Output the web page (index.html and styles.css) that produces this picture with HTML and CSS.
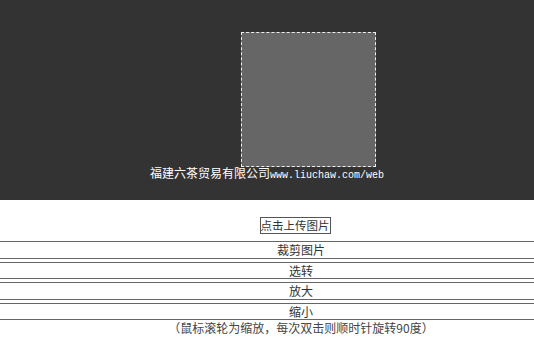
FILE: index.html
```html
<!DOCTYPE html>
<html lang="zh-CN">
<head>
    <meta charset="UTF-8">
    <meta name="viewport" content="width=device-width, initial-scale=1.0">
    <title>图片裁剪</title>
    <link rel="stylesheet" href="styles.css">
</head>
<body>

    <div class="stage">
        <div class="crop-box"></div>
        <p class="caption">福建六茶贸易有限公司<span class="url">www.liuchaw.com/web</span></p>
    </div>

    <div class="controls">
        <div class="upload-row">
            <label class="upload" for="file">点击上传图片</label>
        </div>
        <button class="bar">裁剪图片</button>
        <button class="bar">选转</button>
        <button class="bar">放大</button>
        <button class="bar">缩小</button>
        <p class="tip">（鼠标滚轮为缩放，每次双击则顺时针旋转90度）</p>
    </div>

</body>
</html>
```

FILE: styles.css
```css
/* Basic styling */
body {
    margin: 0;
    padding: 0;
    background-color: #fff;
    font-family: "Noto Sans CJK SC", "Liberation Sans", sans-serif;
    font-size: 12px;
    color: #333;
}

.stage {
    position: relative;
    height: 200px;
    background-color: #333;
    padding-top: 166px;
    box-sizing: border-box;
}

.crop-box {
    position: absolute;
    left: 241px;
    top: 32px;
    width: 133px;
    height: 133px;
    background-color: #666;
    border: 1px dashed #eee;
}

.caption {
    position: relative;
    margin: 0;
    text-align: center;
    color: #fff;
    line-height: 14px;
}

.url {
    font-family: "Liberation Mono", monospace;
    font-size: 10px;
}

.controls {
    text-align: center;
}

.upload-row {
    padding: 17px 0 7px 68px;
    line-height: 0;
}

.upload {
    display: inline-block;
    margin-right: 12px;
    border: 1px solid #555;
    font-size: 11.5px;
    line-height: 15px;
    height: 15px;
    padding: 0;
    color: #333;
    white-space: nowrap;
}

.bar {
    display: block;
    width: 100%;
    height: 17.5px;
    margin: 0 0 3px;
    padding: 0 0 0 68px;
    background: #fff;
    border: none;
    border-top: 1px solid #666;
    border-bottom: 1px solid #666;
    font-family: inherit;
    font-size: 12px;
    line-height: 15px;
    color: #333;
}

.tip {
    margin: -2px 0 0;
    padding-left: 68px;
    line-height: 14px;
    color: #444;
}
```
